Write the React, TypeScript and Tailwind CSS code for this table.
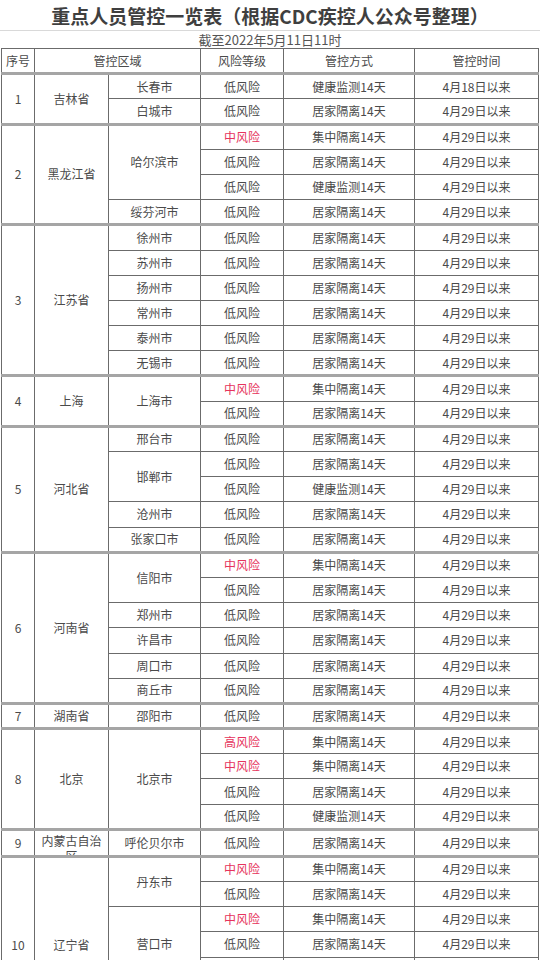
import React from "react";

type Row = { risk: string; method: string; time: string };
type City = { name: string; rows: Row[] };
type Group = { no: string; prov: string; cities: City[] };

const low = (method = "居家隔离14天", time = "4月29日以来"): Row => ({ risk: "低风险", method, time });
const mid = (): Row => ({ risk: "中风险", method: "集中隔离14天", time: "4月29日以来" });

const groups: Group[] = [
  {
    no: "1",
    prov: "吉林省",
    cities: [
      { name: "长春市", rows: [low("健康监测14天", "4月18日以来")] },
      { name: "白城市", rows: [low()] },
    ],
  },
  {
    no: "2",
    prov: "黑龙江省",
    cities: [
      { name: "哈尔滨市", rows: [mid(), low(), low("健康监测14天")] },
      { name: "绥芬河市", rows: [low()] },
    ],
  },
  {
    no: "3",
    prov: "江苏省",
    cities: ["徐州市", "苏州市", "扬州市", "常州市", "泰州市", "无锡市"].map((name) => ({ name, rows: [low()] })),
  },
  {
    no: "4",
    prov: "上海",
    cities: [{ name: "上海市", rows: [mid(), low()] }],
  },
  {
    no: "5",
    prov: "河北省",
    cities: [
      { name: "邢台市", rows: [low()] },
      { name: "邯郸市", rows: [low(), low("健康监测14天")] },
      { name: "沧州市", rows: [low()] },
      { name: "张家口市", rows: [low()] },
    ],
  },
  {
    no: "6",
    prov: "河南省",
    cities: [
      { name: "信阳市", rows: [mid(), low()] },
      { name: "郑州市", rows: [low()] },
      { name: "许昌市", rows: [low()] },
      { name: "周口市", rows: [low()] },
      { name: "商丘市", rows: [low()] },
    ],
  },
  {
    no: "7",
    prov: "湖南省",
    cities: [{ name: "邵阳市", rows: [low()] }],
  },
  {
    no: "8",
    prov: "北京",
    cities: [
      {
        name: "北京市",
        rows: [
          { risk: "高风险", method: "集中隔离14天", time: "4月29日以来" },
          mid(),
          low(),
          low("健康监测14天"),
        ],
      },
    ],
  },
  {
    no: "9",
    prov: "内蒙古自治区",
    cities: [{ name: "呼伦贝尔市", rows: [low()] }],
  },
  {
    no: "10",
    prov: "辽宁省",
    cities: [
      { name: "丹东市", rows: [mid(), low()] },
      { name: "营口市", rows: [mid(), low(), low("健康监测14天")] },
      { name: "沈阳市", rows: [low()] },
      { name: "大连市", rows: [low()] },
    ],
  },
];

const cell = "border border-[#6b6b6b] p-0 text-center align-middle";

export default function App() {
  const body: React.ReactNode[] = [];
  groups.forEach((g) => {
    const total = g.cities.reduce((n, c) => n + c.rows.length, 0);
    let first = true;
    g.cities.forEach((c) => {
      c.rows.forEach((r, ri) => {
        const top = first ? "border-t-[3px] border-t-[#a5a5a5]" : "";
        body.push(
          <tr key={`${g.no}-${c.name}-${ri}`} className="h-[25.2px]">
            {first && (
              <td rowSpan={total} className={`${cell} ${top}`}>
                {g.no}
              </td>
            )}
            {first && (
              <td rowSpan={total} className={`${cell} ${top}`}>
                {g.prov.length > 5 ? (
                  <div className="h-[24px] overflow-hidden px-[2px] pt-[2px] leading-[15px] break-all">{g.prov}</div>
                ) : (
                  g.prov
                )}
              </td>
            )}
            {ri === 0 && (
              <td rowSpan={c.rows.length} className={`${cell} ${top}`}>
                {c.name}
              </td>
            )}
            <td className={`${cell} ${top} ${r.risk === "低风险" ? "" : "text-[#e6335c]"}`}>{r.risk}</td>
            <td className={`${cell} ${top}`}>{r.method}</td>
            <td className={`${cell} ${top}`}>{r.time}</td>
          </tr>
        );
        first = false;
      });
    });
  });

  return (
    <div
      className="h-[960px] w-[540px] overflow-hidden bg-white text-[#4a4a4a]"
      style={{ fontFamily: '"Noto Sans CJK SC", "Noto Sans", sans-serif' }}
    >
      <div className="h-[31px] border-b border-[#d9d9d9] text-center text-[19px] font-semibold leading-[31px] text-[#3f3f3f]">
        重点人员管控一览表（根据CDC疾控人公众号整理）
      </div>
      <div className="h-[17px] text-center text-[13px] leading-[17px] text-[#555]">截至2022年5月11日11时</div>
      <table className="ml-[1px] w-[537px] table-fixed border-collapse text-[12px] leading-none">
        <colgroup>
          <col className="w-[33px]" />
          <col className="w-[74px]" />
          <col className="w-[92px]" />
          <col className="w-[83px]" />
          <col className="w-[131px]" />
          <col className="w-[124px]" />
        </colgroup>
        <thead>
          <tr className="h-[25.2px]">
            <th className={`${cell} font-normal`}>序号</th>
            <th colSpan={2} className={`${cell} font-normal`}>
              管控区域
            </th>
            <th className={`${cell} font-normal`}>风险等级</th>
            <th className={`${cell} font-normal`}>管控方式</th>
            <th className={`${cell} font-normal`}>管控时间</th>
          </tr>
        </thead>
        <tbody>{body}</tbody>
      </table>
    </div>
  );
}
